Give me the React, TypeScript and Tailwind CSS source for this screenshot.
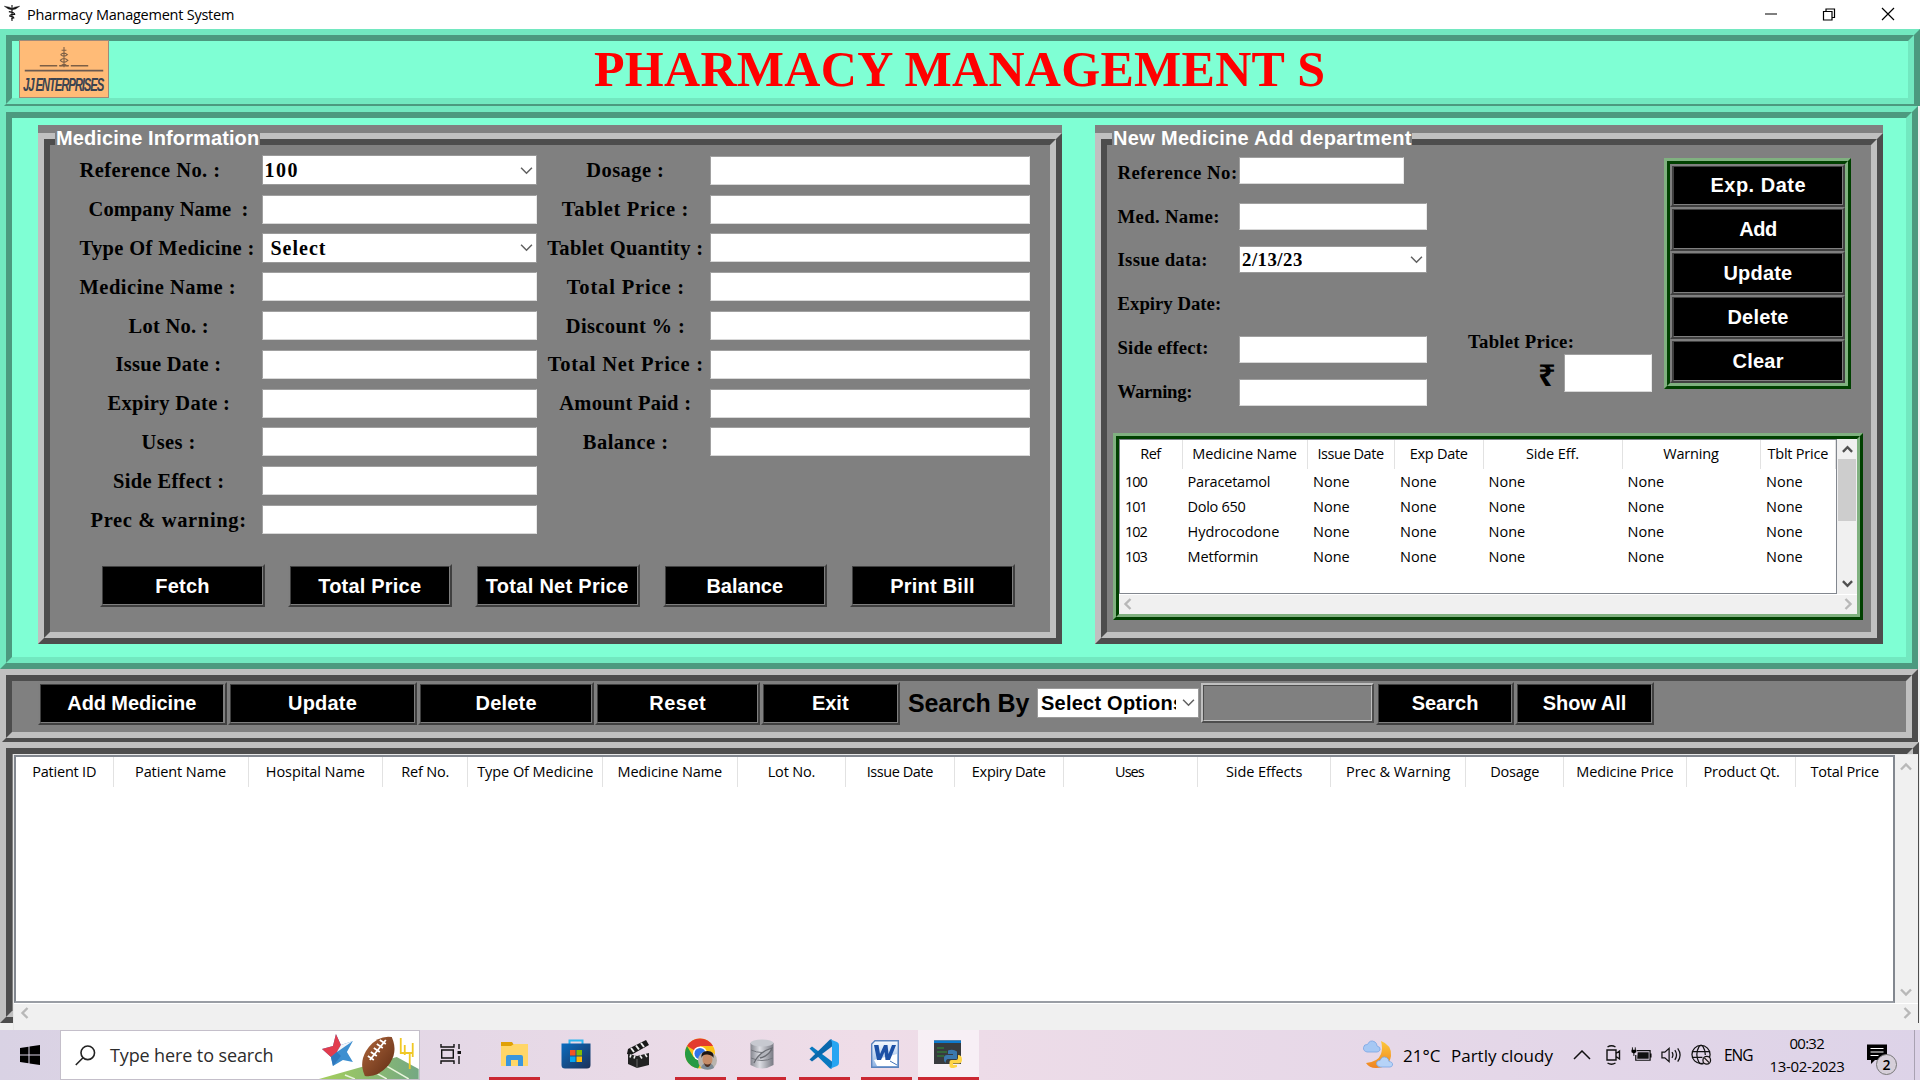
import React, { useLayoutEffect, useRef } from "react";

/** Text whose tracking is adjusted so that it spans exactly `w` pixels. */
function Fit({ children, w, className = "" }: { children: string; w: number; className?: string }) {
  const ref = useRef<HTMLSpanElement>(null);
  useLayoutEffect(() => {
    const el = ref.current;
    if (!el) return;
    el.style.letterSpacing = "0px";
    const natural = el.offsetWidth;
    el.style.letterSpacing = (w - natural) / Math.max(1, children.length - 1) + "px";
  }, [children, w]);
  return (
    <span className={"inline-block shrink-0 whitespace-pre " + className} style={{ width: w }}>
      <span ref={ref} className="inline-block whitespace-pre">{children}</span>
    </span>
  );
}

type Box = { children?: React.ReactNode; className?: string; inner?: string };

const AquaRidge = ({ children, className = "", inner = "" }: Box) => (
  <div className={"border-6 border-t-[#72e8c0] border-l-[#72e8c0] border-r-[#4c997f] border-b-[#4c997f] " + className}>
    <div className={"h-full border-6 border-t-[#4c997f] border-l-[#4c997f] border-r-[#72e8c0] border-b-[#72e8c0] bg-[#7fffd4] " + inner}>
      {children}
    </div>
  </div>
);

const GrayRidge = ({ children, className = "", inner = "" }: Box) => (
  <div className={"border-6 border-t-[#c0c0c0] border-l-[#c0c0c0] border-r-[#4d4d4d] border-b-[#4d4d4d] " + className}>
    <div className={"h-full border-6 border-t-[#4d4d4d] border-l-[#4d4d4d] border-r-[#c0c0c0] border-b-[#c0c0c0] bg-[#808080] " + inner}>
      {children}
    </div>
  </div>
);

const GreenRidge = ({ children, className = "", inner = "" }: Box) => (
  <div className={"border-3 border-t-[#80b180] border-l-[#80b180] border-r-[#004000] border-b-[#004000] " + className}>
    <div className={"h-full border-3 border-t-[#004000] border-l-[#004000] border-r-[#80b180] border-b-[#80b180] " + inner}>
      {children}
    </div>
  </div>
);

const Btn = ({ label, tw, className = "" }: { label: string; tw: number; className?: string }) => (
  <button className={"block shrink-0 border-2 border-t-[#7f7f7f] border-l-[#7f7f7f] border-r-[#404040] border-b-[#404040] " + className}>
    <span className="flex h-full items-center justify-center border-[1.5px] border-t-[#404040] border-l-[#404040] border-r-[#7f7f7f] border-b-[#7f7f7f] bg-black font-['Liberation_Sans',sans-serif] text-[20px] leading-none font-bold text-white">
      <Fit w={tw}>{label}</Fit>
    </span>
  </button>
);

const Entry = ({ className = "" }: { className?: string }) => (
  <div className={"shrink-0 border border-t-[#a0a0a0] border-l-[#a0a0a0] border-r-[#e8e8e8] border-b-[#d8d8d8] bg-white " + className} />
);

const Chevron = ({ className = "", dir = "down", w = 1.4 }: { className?: string; dir?: "down" | "up" | "left" | "right"; w?: number }) => {
  const d = { down: "M1 3.5 L6 8.5 L11 3.5", up: "M1 8.5 L6 3.5 L11 8.5", left: "M8.5 1 L3.5 6 L8.5 11", right: "M3.5 1 L8.5 6 L3.5 11" }[dir];
  return (
    <svg viewBox="0 0 12 12" className={"shrink-0 " + className} fill="none" stroke="currentColor" strokeWidth={w}>
      <path d={d} />
    </svg>
  );
};

const Combo = ({ text, tw, className = "", font = "font-['Liberation_Serif',serif] text-[20px] pl-[2px]" }: { text: string; tw: number; className?: string; font?: string }) => (
  <div className={"flex shrink-0 items-center justify-between border border-[#9a9a9a] bg-white pr-[3px] " + className}>
    <div className={"overflow-hidden leading-[24px] font-bold text-black " + font}>
      <Fit w={tw}>{text}</Fit>
    </div>
    <Chevron className="h-[13px] w-[13px] text-[#606060]" />
  </div>
);

type Field = { t: string; w: number; left?: boolean; combo?: [string, number] };

const leftFields: Field[] = [
  { t: "Reference No. :", w: 141, left: true, combo: ["100", 33] },
  { t: "Company Name  :", w: 160 },
  { t: "Type Of Medicine :", w: 175, left: true, combo: [" Select", 61] },
  { t: "Medicine Name :", w: 156, left: true },
  { t: "Lot No. :", w: 80 },
  { t: "Issue Date :", w: 106 },
  { t: "Expiry Date :", w: 122 },
  { t: "Uses :", w: 54 },
  { t: "Side Effect :", w: 111 },
  { t: "Prec & warning:", w: 156 },
];

const rightFields: Field[] = [
  { t: "Dosage :", w: 78 },
  { t: "Tablet Price :", w: 127 },
  { t: "Tablet Quantity :", w: 156 },
  { t: "Total Price :", w: 117 },
  { t: "Discount % :", w: 119 },
  { t: "Total Net Price :", w: 155 },
  { t: "Amount Paid :", w: 132 },
  { t: "Balance :", w: 85 },
];

const LabelFrame = ({ title, tw, children, className = "" }: { title: string; tw: number; children: React.ReactNode; className?: string }) => (
  <section className={"relative h-[519px] shrink-0 bg-[#808080] pt-[8px] " + className}>
    <GrayRidge className="h-full">{children}</GrayRidge>
    <h2 className="absolute top-[2px] left-[17px] bg-[#808080] pl-[1px] pr-[1px] font-['Liberation_Sans',sans-serif] text-[20px] leading-[22px] font-bold text-white">
      <Fit w={tw}>{title}</Fit>
    </h2>
  </section>
);

const MedicineInfo = () => (
  <LabelFrame title="Medicine Information" tw={203} className="w-[1024px]">
    <div className="flex pt-[6px] pl-[27.5px] font-['Liberation_Serif',serif] text-[20.5px] leading-[24px] font-bold text-black">
      <div>
        {leftFields.map((f) => (
          <div key={f.t} className="flex h-[38.8px] items-center">
            <div className={"flex w-[184px] pl-[2px] " + (f.left ? "justify-start" : "justify-center pr-[4px]")}>
              <Fit w={f.w}>{f.t}</Fit>
            </div>
            {f.combo ? <Combo text={f.combo[0]} tw={f.combo[1]} className="h-[30px] w-[275px]" /> : <Entry className="h-[29px] w-[275px]" />}
          </div>
        ))}
      </div>
      <div>
        {rightFields.map((f) => (
          <div key={f.t} className="flex h-[38.8px] items-center">
            <div className="flex w-[173.5px] justify-center pl-[4px]">
              <Fit w={f.w}>{f.t}</Fit>
            </div>
            <Entry className="h-[29px] w-[320px]" />
          </div>
        ))}
      </div>
    </div>
    <div className="mt-[25px] ml-[50px] flex gap-[23px]">
      <Btn label="Fetch" tw={54} className="h-[43.5px] w-[164.5px]" />
      <Btn label="Total Price" tw={103} className="h-[43.5px] w-[164.5px]" />
      <Btn label="Total Net Price" tw={143} className="h-[43.5px] w-[164.5px]" />
      <Btn label="Balance" tw={77} className="h-[43.5px] w-[164.5px]" />
      <Btn label="Print Bill" tw={84} className="h-[43.5px] w-[164.5px]" />
    </div>
  </LabelFrame>
);

const deptFields: { t: string; w: number; control: React.ReactNode }[] = [
  { t: "Reference No:", w: 120, control: <Entry className="-mt-[4px] h-[27px] w-[165px]" /> },
  { t: "Med. Name:", w: 102, control: <Entry className="h-[27px] w-[188px]" /> },
  { t: "Issue data:", w: 90, control: <Combo text="2/13/23" tw={60} className="-mt-[1px] h-[27px] w-[188px]" font="font-['Liberation_Serif',serif] text-[18.75px] pl-[2px]" /> },
  { t: "Expiry Date:", w: 104, control: null },
  { t: "Side effect:", w: 91, control: <Entry className="mt-[4px] h-[27px] w-[188px]" /> },
  { t: "Warning:", w: 75, control: <Entry className="mt-[1px] h-[27px] w-[188px]" /> },
];

const stockCols = [
  { t: "Ref", w: 21, c: "w-[62.5px]" },
  { t: "Medicine Name", w: 105, c: "w-[125.5px]" },
  { t: "Issue Date", w: 67, c: "w-[87px]" },
  { t: "Exp Date", w: 58, c: "w-[88.5px]" },
  { t: "Side Eff.", w: 53, c: "w-[139px]" },
  { t: "Warning", w: 56, c: "w-[138.5px]" },
  { t: "Tblt Price", w: 61, c: "w-[75px]" },
];
const stockRows: [string, string, number][] = [
  ["100", "Paracetamol", 83],
  ["101", "Dolo 650", 58],
  ["102", "Hydrocodone", 92],
  ["103", "Metformin", 71],
];

const NewMedicine = () => (
  <LabelFrame title="New Medicine Add department" tw={298} className="w-[788px]">
    <div className="flex h-[287.7px] items-start pt-[6px] text-black">
      <div className="w-[361px] pl-[10.5px] font-['Liberation_Serif',serif] text-[18.75px] leading-[22px] font-bold">
        {deptFields.map((f) => (
          <div key={f.t} className="flex h-[43.75px] items-center">
            <div className="w-[121.5px]">
              <Fit w={f.w}>{f.t}</Fit>
            </div>
            {f.control}
          </div>
        ))}
      </div>
      <div className="w-[195.7px] pt-[180px] font-['Liberation_Serif',serif] text-[18.75px] leading-[22px] font-bold">
        <Fit w={106}>Tablet Price:</Fit>
        <div className="flex items-center pl-[70px] mt-[1px]">
          <span className="w-[26px] pt-[3px] font-['Noto_Sans',sans-serif] text-[31px] leading-[31px] font-bold">₹</span>
          <Entry className="h-[38px] w-[88px]" />
        </div>
      </div>
      <GreenRidge className="mt-[6.5px] h-[231.5px] w-[187.5px]" inner="bg-[#404040]">
        <Btn label="Exp. Date" tw={95} className="h-[43.9px] w-full pl-[1px]" />
        <Btn label="Add" tw={38} className="h-[43.9px] w-full pl-[1px]" />
        <Btn label="Update" tw={69} className="h-[43.9px] w-full pl-[1px]" />
        <Btn label="Delete" tw={61} className="h-[43.9px] w-full pl-[1px]" />
        <Btn label="Clear" tw={51} className="h-[43.9px] w-full pl-[1px]" />
      </GreenRidge>
    </div>
    <GreenRidge className="ml-[6px] h-[187px] w-[750px]" inner="flex flex-col bg-[#f0f0f0]">
      <div className="flex h-[155.5px]">
        <div className="h-full w-[718px] overflow-hidden border border-[#82878f] bg-white font-['Open_Sans','Noto_Sans',sans-serif] text-[14.5px] leading-[20px] text-black">
          <div className="flex h-[29.5px]">
            {stockCols.map((c) => (
              <div key={c.t} className={"flex shrink-0 items-center justify-center border-r border-[#e2e2e2] pb-[1px] " + c.c}>
                <Fit w={c.w}>{c.t}</Fit>
              </div>
            ))}
          </div>
          {stockRows.map(([id, name, nw]) => (
            <div key={id} className="flex h-[25px] items-center">
              {stockCols.map((c, i) => (
                <div key={c.t} className={"shrink-0 pl-[5px] " + c.c}>
                  {i === 0 ? <Fit w={23}>{id}</Fit> : i === 1 ? <Fit w={nw}>{name}</Fit> : <Fit w={37}>None</Fit>}
                </div>
              ))}
            </div>
          ))}
        </div>
        <div className="flex flex-1 flex-col items-center pt-[5px] pb-[5px] text-[#505050]">
          <Chevron dir="up" w={2.6} className="h-[11px] w-[11px]" />
          <div className="mt-[4px] h-[62px] w-[18px] bg-[#cdcdcd]" />
          <Chevron w={2.6} className="mt-auto h-[11px] w-[11px]" />
        </div>
      </div>
      <div className="flex flex-1 items-center justify-between border-t border-white px-[3px] text-[#b8b8b8]">
        <Chevron dir="left" w={2.4} className="h-[12px] w-[12px]" />
        <Chevron dir="right" w={2.4} className="h-[12px] w-[12px]" />
      </div>
    </GreenRidge>
  </LabelFrame>
);

const patientCols = [
  { t: "Patient ID", w: 64, c: "w-[97.5px]" },
  { t: "Patient Name", w: 91, c: "w-[135px]" },
  { t: "Hospital Name", w: 99, c: "w-[134.7px]" },
  { t: "Ref No.", w: 48, c: "w-[85px]" },
  { t: "Type Of Medicine", w: 116, c: "w-[135px]" },
  { t: "Medicine Name", w: 105, c: "w-[134.7px]" },
  { t: "Lot No.", w: 48, c: "w-[108.6px]" },
  { t: "Issue Date", w: 67, c: "w-[108.6px]" },
  { t: "Expiry Date", w: 74, c: "w-[108.6px]" },
  { t: "Uses", w: 30, c: "w-[133.9px]" },
  { t: "Side Effects", w: 76, c: "w-[133.9px]" },
  { t: "Prec & Warning", w: 105, c: "w-[135px]" },
  { t: "Dosage", w: 49, c: "w-[97.5px]" },
  { t: "Medicine Price", w: 98, c: "w-[123.5px]" },
  { t: "Product Qt.", w: 76, c: "w-[109px]" },
  { t: "Total Price", w: 69, c: "w-[98px]" },
];

const SearchBar = () => (
  <div className="h-[72.5px] shrink-0 overflow-hidden bg-[#f0f0f0]">
    <GrayRidge className="h-[74.5px] w-[1918px]" inner="flex items-start pl-[25.5px] pt-[0.5px]">
      <Btn label="Add Medicine" tw={129} className="h-[43.75px] w-[189.5px] pr-[1px]" />
      <Btn label="Update" tw={69} className="ml-[1px] h-[43.75px] w-[189px]" />
      <Btn label="Delete" tw={61} className="ml-[1px] h-[43.75px] w-[176px]" />
      <Btn label="Reset" tw={56} className="ml-[1px] h-[43.75px] w-[164.5px]" />
      <Btn label="Exit" tw={37} className="ml-[1px] h-[43.75px] w-[139.5px]" />
      <div className="mt-[6px] ml-[8px] w-[129px] font-['Liberation_Sans',sans-serif] text-[25px] leading-[30px] font-bold text-black">
        <Fit w={121}>Search By</Fit>
      </div>
      <Combo text="Select Options" tw={143} className="mt-[6px] h-[30px] w-[162px]" font="font-['Liberation_Sans',sans-serif] text-[20px] ml-[3px] w-[135px]" />
      <div className="mt-[1px] ml-[2px] h-[40px] w-[173px] border-[2px] border-t-[#c0c0c0] border-l-[#c0c0c0] border-r-[#4d4d4d] border-b-[#4d4d4d]">
        <div className="h-full border-[1.5px] border-t-[#4d4d4d] border-l-[#4d4d4d] border-r-[#c0c0c0] border-b-[#c0c0c0] bg-[#808080]" />
      </div>
      <Btn label="Search" tw={67} className="ml-[2px] h-[43.75px] w-[138px]" />
      <Btn label="Show All" tw={84} className="ml-[1px] h-[43.75px] w-[139px]" />
    </GrayRidge>
  </div>
);

const PatientTable = () => (
  <div className="relative h-[288.5px] shrink-0 overflow-hidden bg-[#f0f0f0]">
    <GrayRidge className="absolute top-0 left-0 h-[281px] w-[1919px]" />
    <div className="relative mt-[12px] ml-[13px] flex h-[276.5px] w-[1905px] flex-col border-t border-l border-[#e8e8e8] bg-[#f0f0f0]">
      <div className="flex h-[248.5px]">
        <div className="w-[1880.5px] overflow-hidden border-2 border-t-[#82878f] border-l-[#82878f] border-r-[#82878f] border-b-[#9a9ea5] bg-white">
          <div className="flex h-[30px] font-['Open_Sans','Noto_Sans',sans-serif] text-[14.5px] leading-[20px] text-black">
            {patientCols.map((c) => (
              <div key={c.t} className={"flex shrink-0 items-center justify-center border-r border-[#e2e2e2] " + c.c}>
                <Fit w={c.w}>{c.t}</Fit>
              </div>
            ))}
          </div>
        </div>
        <div className="flex flex-1 flex-col items-center justify-between pt-[6px] pb-[5px] text-[#b8b8b8]">
          <Chevron dir="up" w={2.4} className="h-[12px] w-[12px]" />
          <Chevron w={2.4} className="h-[12px] w-[12px]" />
        </div>
      </div>
      <div className="flex h-[18px] items-center justify-between border-t border-white px-[5px] text-[#b8b8b8]">
        <Chevron dir="left" w={2.4} className="h-[12px] w-[12px]" />
        <Chevron dir="right" w={2.4} className="h-[12px] w-[12px]" />
      </div>
    </div>
  </div>
);

const Logo = () => (
  <div className="mt-[-1px] ml-[7px] flex h-[58px] w-[90px] flex-col items-center border border-[#a08a78] bg-[#ffbb77] text-[#7d5f45]">
    <svg viewBox="0 0 84 32" className="mt-[2px] h-[31px] w-[84px] shrink-0" fill="none" stroke="currentColor">
      <path d="M42 4v21M39.5 7.500h5M38.500 12q3.500-3 7 0q-3.500 3-7 0M38 18q4-4 8 0q-4 4-8 0M38.500 24q3.500-4 7 0" strokeWidth="1.100" />
      <path d="M17 23.500h18M49 23.500h18M37 23.500h10" strokeWidth="1.600" />
      <path d="M1.500 28.500h81" stroke="#6b5a50" strokeWidth="1.600" />
    </svg>
    <div className="h-[21px] w-[82px]">
      <div className="w-[136px] origin-left scale-x-[0.6] font-['Liberation_Sans',sans-serif] text-[19px] leading-[21px] font-bold text-[#3b4350] italic">
        <Fit w={136}>JJ ENTERPRISES</Fit>
      </div>
    </div>
  </div>
);

const TitleBar = () => (
  <div className="flex h-[29px] shrink-0 items-center bg-white pr-[24px] pl-[3px] text-black">
    <svg viewBox="0 0 18 20" className="-mt-[3px] h-[18px] w-[18px]" fill="none" stroke="#111" strokeWidth="1.200">
      <path d="M0.500 2.500L6 3.500L9 5L12 3.500L17.500 2.500L13 5.500L9 6.500L5 5.500Z" fill="#111" strokeWidth="0.500" />
      <path d="M9 1v18M5.500 8.500q6.500 1 6.500 3q-6 0-5.500 2q4.500 0.500 4.500 2q-2.500 0-2.500 1.500" />
    </svg>
    <div className="ml-[6px] flex-1 font-['Open_Sans','Noto_Sans',sans-serif] text-[14.5px] leading-[20px]">
      <Fit w={207}>Pharmacy Management System</Fit>
    </div>
    <svg viewBox="0 0 132 16" className="mb-[1px] h-[16px] w-[132px]" fill="none" stroke="#000" strokeWidth="1.200">
      <path d="M1 8h12M118 2l12 12M130 2l-12 12" />
      <path d="M59.500 5.500h8.500v8.500h-8.500zM62 5.500v-2.500h8.500v8.500h-2.500" />
    </svg>
  </div>
);

const Football = () => (
  <svg viewBox="0 0 100 48" className="h-[48px] w-[100px]">
    <defs>
      <linearGradient id="turf" x1="0" x2="1"><stop offset="0" stopColor="#a5cf5c" /><stop offset="1" stopColor="#74a883" /></linearGradient>
      <linearGradient id="ball" x1="0" y1="0" x2="1" y2="1"><stop offset="0" stopColor="#b0673c" /><stop offset="1" stopColor="#5f2c14" /></linearGradient>
    </defs>
    <path d="M0 48L78 26L100 38V48Z" fill="url(#turf)" />
    <path d="M26 44l10 4M46 36l22 12M64 33l26 15" stroke="#e9f5dc" strokeWidth="1.500" />
    <path d="M82 7V22H94V12M94 22V14M86 14V24M82 22H94V26M91 22V38" fill="none" stroke="#f0c825" strokeWidth="1.800" />
    <path d="M17 3L22 14L34 10L28 21L34 31L24 29L14 35L12 26L3 18L14 15Z" fill="#3d8fd0" />
    <path d="M17 3L22 14L18 21L12 26L3 18L14 15Z" fill="#e23c4e" />
    <path d="M22 14L34 10L18 21Z" fill="#f6f6fa" />
    <path d="M18 21L12 26L14 35L22 25Z" fill="#2f78bd" />
    <path d="M73 6Q80 22 69 35Q58 47 46 45Q39 30 50 16Q60 4 73 6Z" fill="url(#ball)" />
    <path d="M67 9L51 29M61 9l6 4M58 13l6 4M55 17l6 4M52 21l6 4M49 25l6 4" stroke="#fff" strokeWidth="1.800" />
  </svg>
);

const Slot = ({ children, open = false, active = false, className = "" }: { children: React.ReactNode; open?: boolean; active?: boolean; className?: string }) => (
  <div className={"flex h-[50px] shrink-0 flex-col items-center " + (active ? "bg-white/55 " : "") + className}>
    <div className="flex flex-1 items-center pt-[1px]">{children}</div>
    <div className={"h-[3px] w-full " + (open ? "bg-[#cb2832]" : "")} />
  </div>
);

const TaskBar = () => (
  <div className="flex h-[50px] shrink-0 bg-linear-to-r from-[#d9d2e4] via-[#efdde8] via-45% to-[#ddd3e8] font-['Open_Sans','Noto_Sans',sans-serif] text-black">
    <div className="flex w-[60px] items-center pl-[20px]">
      <svg viewBox="0 0 20 20" className="h-[20px] w-[20px]"><path d="M0 3L8.500 1.700V9.500H0ZM9.500 1.500L20 0V9.500H9.500ZM0 10.500H8.500V18.300L0 17ZM9.500 10.500H20V20L9.500 18.500Z" /></svg>
    </div>
    <div className="flex w-[360px] items-center border border-[#c4bfca] bg-white">
      <svg viewBox="0 0 21 21" className="ml-[14px] h-[21px] w-[21px]" fill="none" stroke="#222" strokeWidth="1.600"><circle cx="12.800" cy="7.800" r="6.800" /><path d="M8 12.800L0.800 20" /></svg>
      <div className="ml-[14px] w-[210px] text-[18px] leading-[24px] text-[#2c2c2c]"><Fit w={164}>Type here to search</Fit></div>
      <Football />
    </div>
    <Slot className="w-[61px]">
      <svg viewBox="0 0 22 20" className="h-[20px] w-[22px]" fill="none" stroke="#111" strokeWidth="1.400"><path d="M1 0v3h13V0M1 20v-3h13v3M1.700 6h11.600v8H1.700zM19 0v5M19 12v8" /><path d="M17.500 7h3.500v3h-3.500z" fill="#111" stroke="none" /></svg>
    </Slot>
    <Slot open className="ml-[8px] w-[51px]">
      <svg viewBox="0 0 28 25" className="h-[27px] w-[28px]"><path d="M0 0h11l2 3v4H0z" fill="#e0a106" /><path d="M0 4h10l3-2h14v22H0z" fill="#ffd668" /><path d="M5 24v-9q0-2 2-2h13q2 0 2 2v9h-5v-6h-7v6z" fill="#3a96dd" /></svg>
    </Slot>
    <Slot className="ml-[10px] w-[51px]">
      <svg viewBox="0 0 30 30" className="h-[30px] w-[30px]"><defs><linearGradient id="store" x2="1" y2="1"><stop stopColor="#0a6cc0" /><stop offset="1" stopColor="#1d3158" /></linearGradient></defs><path d="M8.500 6V1.500h13V6" fill="none" stroke="#2db6f0" strokeWidth="2" /><path d="M0.500 4.500h29V26q0 3.500-3.500 3.500H4q-3.500 0-3.500-3.500z" fill="url(#store)" /><path d="M9 11h5.500v5.500H9z" fill="#f35325" /><path d="M15.500 11H21v5.500h-5.500z" fill="#81bc06" /><path d="M9 17.500h5.500V23H9z" fill="#05a6f0" /><path d="M15.500 17.500H21V23h-5.500z" fill="#ffba08" /></svg>
    </Slot>
    <Slot className="ml-[12px] w-[50px]">
      <svg viewBox="0 0 24 28" className="h-[28px] w-[24px]"><path d="M1 14L2 9L20 0L23 5L5 15Z" fill="#191919" /><path d="M5 8l3 4M10 5.500l3 4M15 3l3 4" stroke="#eee" strokeWidth="2" /><path d="M2 14L11 16L23 13V25L11 28L2 24Z" fill="#222" /><path d="M5 14.500l-1 3M9 15.500l-1 3M14 15.500l2 3M19 14l2 3" stroke="#eee" strokeWidth="1.600" /><path d="M11 19v9" stroke="#666" /></svg>
    </Slot>
    <Slot open className="ml-[12px] w-[51px]">
      <svg viewBox="0 0 32 32" className="h-[32px] w-[32px]"><circle cx="15" cy="15.500" r="15" fill="#fbc116" /><path d="M15 15.500L2 8A15 15 0 0 1 28 8H15Z" fill="#e33b2e" /><path d="M2 8A15 15 0 0 0 13 30.400L19 19L8.500 19Z" fill="#269a43" /><circle cx="15" cy="15.500" r="7" fill="#fff" /><circle cx="15" cy="15.500" r="5.500" fill="#2f73e8" /><circle cx="22.500" cy="22.500" r="9.500" fill="#b9b4ae" /><path d="M16 30q1-5 6.500-5t6.500 5q-6 3-13 0" fill="#7f8c97" /><ellipse cx="22.500" cy="21.500" rx="5" ry="6.500" fill="#c68c68" /><path d="M16.500 20q-1-7 6-7t6 7q-1-3-6-3.500t-6 3.500" fill="#1d1512" /><path d="M19 25q3.500 3 7 0q-1 4-3.500 4t-3.500-4" fill="#4c3126" /></svg>
    </Slot>
    <Slot open className="ml-[11px] w-[51px] pr-[2px]">
      <svg viewBox="0 0 24 30" className="h-[30px] w-[24px]"><defs><linearGradient id="db" x2="1"><stop stopColor="#84868e" /><stop offset="0.400" stopColor="#dcdde3" /><stop offset="1" stopColor="#777982" /></linearGradient></defs><path d="M0.500 4Q12-2 23.500 4V26Q12 33 0.500 26Z" fill="url(#db)" /><ellipse cx="12" cy="4" rx="11.500" ry="3.500" fill="#c7c9d0" /><path d="M1 11q11 5 22 0M1 19q11 5 22 0" fill="none" stroke="#75777e" /><path d="M4 24Q9 13 22 9Q19 17 10 19" fill="#b4b6bd" stroke="#6a6c73" strokeWidth="1.300" /></svg>
    </Slot>
    <Slot open className="ml-[11px] w-[51px]">
      <svg viewBox="0 0 30 30" className="-ml-[1px] h-[30px] w-[30px]"><path d="M0.500 9.500L3 7.500L23 22.500V29.500L21 29.500Z" fill="#0879c0" /><path d="M0.500 20.500L3 22.500L23 7.500V0.500L21 0.500Z" fill="#0a68ad" /><path d="M21 0.200L28 3Q30 4 30 6V24Q30 26 28 27L21 29.800Q23 28.500 23 26V4Q23 1.500 21 0.200Z" fill="#27a5f2" /></svg>
    </Slot>
    <Slot open className="ml-[11px] w-[51px]">
      <svg viewBox="0 0 28 28" className="-ml-[3px] h-[28px] w-[28px]"><defs><linearGradient id="wd" x2="0" y2="1"><stop stopColor="#f7fbff" /><stop offset="1" stopColor="#8eb2e3" /></linearGradient></defs><path d="M4 0.700h23.300V27.300H0.700V4Z" fill="url(#wd)" stroke="#5a83bd" strokeWidth="1.400" /><path d="M3 20L26 14V26H6Z" fill="#fff" /><path d="M3 5h4.500l1.500 9L13 5h3.500l1 9L21 5h4l-6 15h-4.500L13.500 12L10 20H6Z" fill="#1c50a5" /><path d="M19 21l7 4" stroke="#4472b8" /></svg>
    </Slot>
    <Slot open active className="ml-[6px] w-[61px]">
      <svg viewBox="0 0 28 28" className="-ml-[1px] h-[28px] w-[28px]"><path d="M0 0.500h27V24H0z" fill="#383b3e" /><path d="M0 0.500h27V3H0z" fill="#0c79cd" /><path d="M3 8h7M3 12h10M3 16h7" stroke="#2e9136" strokeWidth="1.200" /><path d="M14 10.500q5-2 9 1V19h-9q-2 0-2.500 4Q9.500 21 10 18q0-3 3-3h6v-1h-5z" fill="#3a78ae" /><path d="M24 15q4 0 4 4.500t-4 4H19v1.500h4V27q-6 2.500-7.500-0.500V22q0-2 2-2h4.500q2 0 2-2z" fill="#ffd548" /></svg>
    </Slot>

    <div className="ml-auto flex h-full w-[557px] items-center">
      <svg viewBox="0 0 32 30" className="h-[30px] w-[32px]"><defs><linearGradient id="moon" x2="0" y2="1"><stop stopColor="#fcc83b" /><stop offset="1" stopColor="#ef8421" /></linearGradient></defs><path d="M18 1Q29 5 28 16Q26 28 13 28Q6 28 3 23Q15 22 18 14Q20 8 18 1Z" fill="url(#moon)" /><path d="M4 12q-4-1-3.500-4.500Q1 4 4.500 4.500Q7-1 12 2Q14 3.500 14 6Q18 7 17 10Q16 12 14 12Z" fill="#a6c8f4" stroke="#7aa6e4" strokeWidth="0.800" /><path d="M17 27q-4-1-3.500-4Q14 20 17 20.500Q19 15.500 23.500 17.500Q26 19 26 21.500Q30 22 29.500 25Q29 27 27 27Z" fill="#b6d3f7" stroke="#7aa6e4" strokeWidth="0.800" /></svg>
      <div className="mt-[2px] ml-[8px] w-[48px] text-[17px] leading-[24px]"><Fit w={37}>21°C</Fit></div>
      <div className="mt-[2px] w-[122px] text-[17px] leading-[24px]"><Fit w={102}>Partly cloudy</Fit></div>
      <svg viewBox="0 0 18 10" className="h-[10px] w-[18px]" fill="none" stroke="#111" strokeWidth="1.500"><path d="M1 9L9 1L17 9" /></svg>
      <svg viewBox="0 0 16 20" className="ml-[14px] h-[20px] w-[16px]" fill="none" stroke="#111" strokeWidth="1.400"><path d="M2 5h9v10H2zM11 8.500L14.500 6V14L11 11.500M2.500 2Q6.500-0.500 10.500 2M2.500 18Q6.500 20.500 10.500 18" /></svg>
      <svg viewBox="0 0 22 16" className="ml-[10px] h-[16px] w-[21px]"><path d="M6 3.500h14v10H5V8" fill="none" stroke="#111" strokeWidth="1.300" /><path d="M7 5h11.500v7H6.500z" fill="#111" /><path d="M20 6.500h1.500v4H20z" /><path d="M1.500 0v3M4.500 0v3M3 6v3" stroke="#111" /><path d="M0.500 2.500h5V5L3 6.500L0.500 5Z" /></svg>
      <svg viewBox="0 0 22 18" className="ml-[9px] h-[18px] w-[21px]" fill="none" stroke="#111" strokeWidth="1.300"><path d="M1 6h3L8.500 2V16L4 12H1zM11.500 6q2 3 0 6M14.500 4q3.500 5 0 10M17.500 2q5 7 0 14" /></svg>
      <svg viewBox="0 0 22 22" className="ml-[9px] h-[22px] w-[21px]" fill="none" stroke="#111" strokeWidth="1.300"><circle cx="10.500" cy="10.500" r="9.500" /><path d="M1 7.500h19M1 13.500h11M13 20Q9 21 8 18Q4 10 8.500 2Q10.500 0 12.500 2Q15 6 15 11" /><circle cx="16.500" cy="16.500" r="4" fill="#e6d5e0" /><path d="M14 14l5 5" /></svg>
      <div className="ml-[12px] w-[45px] text-[15.500px] leading-[22px]"><Fit w={30}>ENG</Fit></div>
      <div className="flex w-[76px] flex-col items-center text-[15px] leading-[23px]">
        <Fit w={35}>00:32</Fit>
        <Fit w={75}>13-02-2023</Fit>
      </div>
      <div className="relative ml-[22px] h-[26px] w-[32px] self-start mt-[14px]">
        <svg viewBox="0 0 20 20" className="h-[20px] w-[20px]"><path d="M0 0.500h20V16H8L4 20V16H0Z" /><path d="M3.500 4.500h13M3.500 8h13M3.500 11.500h8" stroke="#fff" strokeWidth="1.200" /></svg>
        <span className="absolute top-[10px] left-[9px] flex h-[21px] w-[21px] items-center justify-center rounded-full border border-[#777] bg-[#d6cfd9] text-[14px] leading-none font-semibold">2</span>
      </div>
      <div className="ml-auto mr-[5px] h-full w-px bg-[#a9a2b2]" />
    </div>
  </div>
);

export default function App() {
  return (
    <div className="flex h-[1080px] w-[1920px] flex-col overflow-hidden bg-[#f0f0f0]">
      <TitleBar />
      <div className="h-[77px] shrink-0 overflow-hidden">
        <AquaRidge className="h-[81px] w-[1920px]" inner="flex">
          <Logo />
          <div className="ml-[485px] font-['Liberation_Serif',serif] text-[50px] leading-[56px] font-bold text-[#ff0000]">
            <Fit w={731}>PHARMACY MANAGEMENT S</Fit>
          </div>
        </AquaRidge>
      </div>
      <AquaRidge className="h-[563px] w-[1918px] shrink-0" inner="flex gap-[33px] pt-[7px] pl-[26px]">
        <MedicineInfo />
        <NewMedicine />
      </AquaRidge>
      <SearchBar />
      <PatientTable />
      <TaskBar />
    </div>
  );
}
